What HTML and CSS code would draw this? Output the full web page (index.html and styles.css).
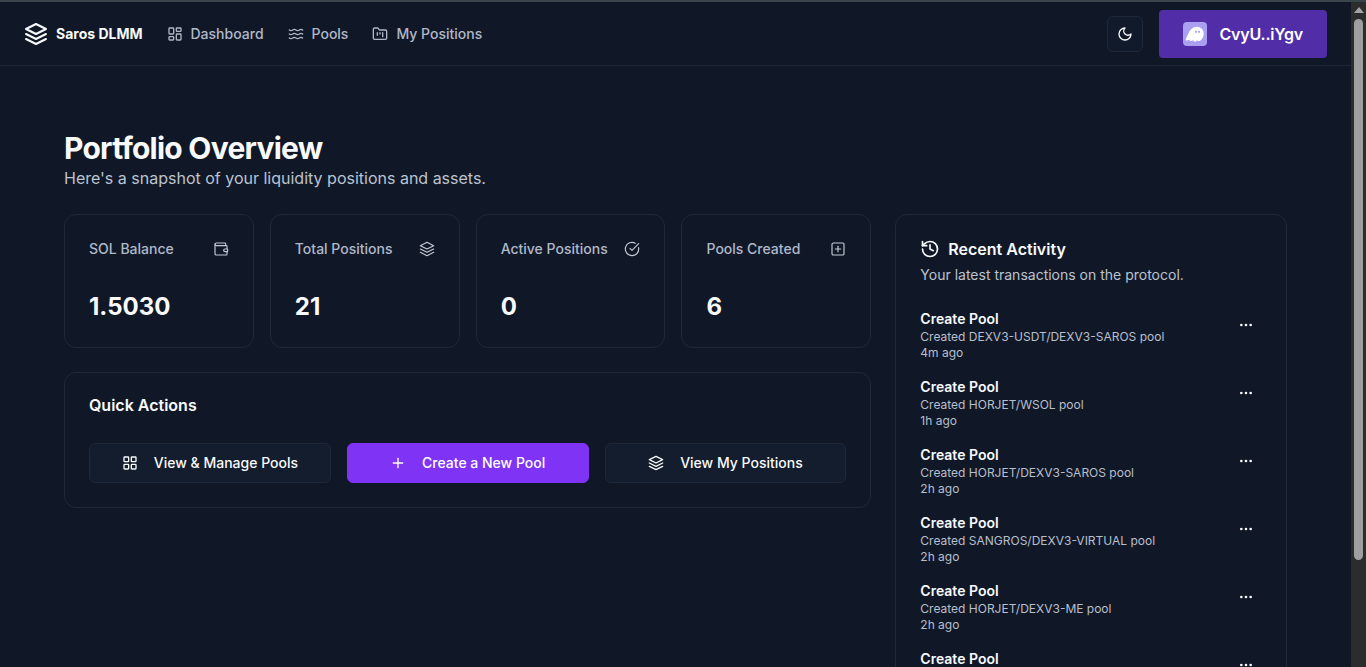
FILE: index.html
```html
<!DOCTYPE html>
<html lang="en">
<head>
<meta charset="utf-8">
<title>Saros DLMM</title>
<link rel="stylesheet" href="styles.css">
</head>
<body>
<svg class="sprite" aria-hidden="true">
  <symbol id="i-layers" viewBox="0 0 24 24"><path d="M12 2 2 7l10 5 10-5-10-5Z"/><path d="m2 12 10 5 10-5"/><path d="m2 17 10 5 10-5"/></symbol>
  <symbol id="i-dash" viewBox="0 0 24 24"><rect x="3" y="3" width="7" height="9" rx="1"/><rect x="14" y="3" width="7" height="5" rx="1"/><rect x="14" y="12" width="7" height="9" rx="1"/><rect x="3" y="16" width="7" height="5" rx="1"/></symbol>
  <symbol id="i-grid" viewBox="0 0 24 24"><rect x="3" y="3" width="7" height="7" rx="1"/><rect x="14" y="3" width="7" height="7" rx="1"/><rect x="14" y="14" width="7" height="7" rx="1"/><rect x="3" y="14" width="7" height="7" rx="1"/></symbol>
  <symbol id="i-waves" viewBox="0 0 24 24"><path d="M2 6c.6.5 1.2 1 2.500 1C7 7 7 5 9.500 5c2.600 0 2.400 2 5 2 2.500 0 2.500-2 5-2 1.300 0 1.900.5 2.500 1"/><path d="M2 12c.6.5 1.200 1 2.500 1 2.500 0 2.500-2 5-2 2.600 0 2.400 2 5 2 2.500 0 2.500-2 5-2 1.300 0 1.900.5 2.500 1"/><path d="M2 18c.6.5 1.200 1 2.500 1 2.500 0 2.500-2 5-2 2.600 0 2.400 2 5 2 2.500 0 2.500-2 5-2 1.300 0 1.900.5 2.500 1"/></symbol>
  <symbol id="i-folder" viewBox="0 0 24 24"><path d="M4 20h16a2 2 0 0 0 2-2V8a2 2 0 0 0-2-2h-7.930a2 2 0 0 1-1.660-.9l-.82-1.200A2 2 0 0 0 7.930 3H4a2 2 0 0 0-2 2v13c0 1.100.9 2 2 2Z"/><path d="M8 10v4"/><path d="M12 10v2"/><path d="M16 10v6"/></symbol>
  <symbol id="i-moon" viewBox="0 0 24 24"><path d="M12 3a6 6 0 0 0 9 9 9 9 0 1 1-9-9Z"/></symbol>
  <symbol id="i-wallet" viewBox="0 0 24 24"><path d="M19 7V4a1 1 0 0 0-1-1H5a2 2 0 0 0 0 4h15a1 1 0 0 1 1 1v4h-3a2 2 0 0 0 0 4h3a1 1 0 0 0 1-1v-2a1 1 0 0 0-1-1"/><path d="M3 5v14a2 2 0 0 0 2 2h15a1 1 0 0 0 1-1v-4"/></symbol>
  <symbol id="i-check" viewBox="0 0 24 24"><path d="M21.800 10A10 10 0 1 1 17 3.340"/><path d="m9 11 3 3L22 4"/></symbol>
  <symbol id="i-square-plus" viewBox="0 0 24 24"><rect x="3" y="3" width="18" height="18" rx="2"/><path d="M8 12h8"/><path d="M12 8v8"/></symbol>
  <symbol id="i-plus" viewBox="0 0 24 24"><path d="M5 12h14"/><path d="M12 5v14"/></symbol>
  <symbol id="i-history" viewBox="0 0 24 24"><path d="M3 12a9 9 0 1 0 9-9 9.750 9.750 0 0 0-6.740 2.740L3 8"/><path d="M3 3v5h5"/><path d="M12 7v5l4 2"/></symbol>
  <symbol id="i-dots" viewBox="0 0 24 24"><circle cx="12" cy="12" r="1"/><circle cx="19" cy="12" r="1"/><circle cx="5" cy="12" r="1"/></symbol>
</svg>

<div class="page">
  <header class="topbar">
    <div class="topbar-left">
      <a class="brand"><svg class="icon brand-icon"><use href="#i-layers"/></svg><span>Saros DLMM</span></a>
      <nav class="nav">
        <a class="nav-link"><svg class="icon"><use href="#i-dash"/></svg>Dashboard</a>
        <a class="nav-link"><svg class="icon"><use href="#i-waves"/></svg>Pools</a>
        <a class="nav-link"><svg class="icon"><use href="#i-folder"/></svg>My Positions</a>
      </nav>
    </div>
    <div class="topbar-right">
      <button class="theme-btn"><svg class="icon"><use href="#i-moon"/></svg></button>
      <button class="wallet-btn">
        <svg class="wallet-logo" viewBox="0 0 24 24"><rect width="24" height="24" rx="4" fill="#ab9ff2"/><path fill="#fff" d="M3.200 18.600c-.6 0-.8-.5-.5-1.100C4.600 13.500 7 4.800 13.500 4.800c4.500 0 7.200 3.200 7.200 6.600 0 4-2.600 7.700-5 7.700-1 0-1.500-.8-1.500-.8s-1 1.400-2.200 1.400c-1.200 0-1.800-1.400-1.800-1.400s-1.400.9-2.600.6c-1-.2-1.400-.9-1.400-.9s-2.500.6-3.400.6Z"/><circle cx="12.900" cy="9.800" r="1.100" fill="#ab9ff2"/><circle cx="16.100" cy="9.800" r="1.100" fill="#ab9ff2"/></svg>
        CvyU..iYgv
      </button>
    </div>
  </header>

  <main class="main">
    <h1 class="title">Portfolio Overview</h1>
    <p class="subtitle">Here's a snapshot of your liquidity positions and assets.</p>

    <div class="layout">
      <div class="left">
        <section class="stats">
          <div class="card stat"><div class="stat-head"><span>SOL Balance</span><svg class="icon"><use href="#i-wallet"/></svg></div><div class="stat-value">1.5030</div></div>
          <div class="card stat"><div class="stat-head"><span>Total Positions</span><svg class="icon"><use href="#i-layers"/></svg></div><div class="stat-value">21</div></div>
          <div class="card stat"><div class="stat-head"><span>Active Positions</span><svg class="icon"><use href="#i-check"/></svg></div><div class="stat-value">0</div></div>
          <div class="card stat"><div class="stat-head"><span>Pools Created</span><svg class="icon"><use href="#i-square-plus"/></svg></div><div class="stat-value">6</div></div>
        </section>

        <section class="card actions">
          <h2 class="actions-title">Quick Actions</h2>
          <div class="actions-row">
            <button class="action"><svg class="icon"><use href="#i-grid"/></svg>View &amp; Manage Pools</button>
            <button class="action action-primary"><svg class="icon"><use href="#i-plus"/></svg>Create a New Pool</button>
            <button class="action"><svg class="icon"><use href="#i-layers"/></svg>View My Positions</button>
          </div>
        </section>
      </div>

      <aside class="card activity">
        <h2 class="activity-title"><svg class="icon icon-20"><use href="#i-history"/></svg>Recent Activity</h2>
        <p class="activity-sub">Your latest transactions on the protocol.</p>
        <ul class="activity-list">
          <li class="row"><div><div class="row-title">Create Pool</div><div class="row-text">Created DEXV3-USDT/DEXV3-SAROS pool</div><div class="row-text">4m ago</div></div><button class="more"><svg class="icon"><use href="#i-dots"/></svg></button></li>
          <li class="row"><div><div class="row-title">Create Pool</div><div class="row-text">Created HORJET/WSOL pool</div><div class="row-text">1h ago</div></div><button class="more"><svg class="icon"><use href="#i-dots"/></svg></button></li>
          <li class="row"><div><div class="row-title">Create Pool</div><div class="row-text">Created HORJET/DEXV3-SAROS pool</div><div class="row-text">2h ago</div></div><button class="more"><svg class="icon"><use href="#i-dots"/></svg></button></li>
          <li class="row"><div><div class="row-title">Create Pool</div><div class="row-text">Created SANGROS/DEXV3-VIRTUAL pool</div><div class="row-text">2h ago</div></div><button class="more"><svg class="icon"><use href="#i-dots"/></svg></button></li>
          <li class="row"><div><div class="row-title">Create Pool</div><div class="row-text">Created HORJET/DEXV3-ME pool</div><div class="row-text">2h ago</div></div><button class="more"><svg class="icon"><use href="#i-dots"/></svg></button></li>
          <li class="row"><div><div class="row-title">Create Pool</div></div><button class="more"><svg class="icon"><use href="#i-dots"/></svg></button></li>
        </ul>
      </aside>
    </div>
  </main>
</div>

<div class="scrollbar" aria-hidden="true">
  <div class="scroll-arrow"></div>
  <div class="scroll-thumb"></div>
</div>
</body>
</html>
```

FILE: styles.css
```css
* { box-sizing: border-box; }

html, body { height: 100%; }

body {
  margin: 0;
  height: 100vh;
  overflow: hidden;
  display: flex;
  border-top: 2px solid #39434a;
  background: #101828;
  color: #f8fafc;
  font-family: Inter, "Noto Sans", sans-serif;
  font-size: 14px;
  line-height: 20px;
}

.sprite { display: none; }

.icon {
  width: 16px;
  height: 16px;
  flex: none;
  fill: none;
  stroke: currentColor;
  stroke-width: 2;
  stroke-linecap: round;
  stroke-linejoin: round;
}
.icon-20 { width: 20px; height: 20px; }

.page { flex: 1; min-width: 0; }

.topbar {
  height: 64px;
  padding: 0 24px;
  display: flex;
  align-items: center;
  justify-content: space-between;
  border-bottom: 1px solid #1e2838;
}
.topbar-left, .topbar-right { display: flex; align-items: center; }
.topbar-left { gap: 24px; }
.topbar-right { gap: 16px; }

.brand {
  display: flex;
  align-items: center;
  gap: 8px;
  font-weight: 700;
  color: #f8fafc;
}
.brand-icon { width: 24px; height: 24px; }

.nav { display: flex; gap: 24px; }
.nav-link {
  display: flex;
  align-items: center;
  gap: 8px;
  font-weight: 500;
  color: #b0b8c8;
}

.theme-btn {
  width: 36px;
  height: 36px;
  padding: 0;
  display: flex;
  align-items: center;
  justify-content: center;
  border: 1px solid #1e2838;
  border-radius: 6px;
  background: #111a2a;
  color: #f8fafc;
}

.wallet-btn {
  height: 48px;
  padding: 0 24px;
  display: flex;
  align-items: center;
  gap: 12px;
  border: 0;
  border-radius: 4px;
  background: #512da8;
  color: #fff;
  font: 600 16px/24px Inter, sans-serif;
  letter-spacing: -0.2px;
}
.wallet-logo { width: 24px; height: 24px; flex: none; }

.main { padding: 64px 64px 0; }

.title {
  margin: 0;
  font-size: 30px;
  line-height: 36px;
  font-weight: 700;
  letter-spacing: -0.75px;
  color: #f8fafc;
}
.subtitle {
  margin: 0 0 24px;
  font-size: 16px;
  line-height: 24px;
  color: #bcc3cf;
}

.layout {
  display: grid;
  grid-template-columns: repeat(3, minmax(0, 1fr));
  gap: 24px;
  align-items: start;
}
.left {
  grid-column: span 2;
  display: flex;
  flex-direction: column;
  gap: 24px;
}

.card {
  border: 1px solid #1e2838;
  border-radius: 12px;
  background: #101828;
}

.stats {
  display: grid;
  grid-template-columns: repeat(4, minmax(0, 1fr));
  gap: 16px;
}
.stat { padding: 24px; }
.stat-head {
  display: flex;
  align-items: center;
  justify-content: space-between;
  font-weight: 500;
  color: #b0b8c8;
}
.stat-head .icon { color: #c3c9d5; stroke-width: 1.75; }
.stat-value {
  margin-top: 32px;
  font-size: 24px;
  line-height: 32px;
  font-weight: 700;
  color: #f8fafc;
}

.actions { padding: 24px; }
.actions-title {
  margin: 0 0 30px;
  font-size: 16px;
  line-height: 16px;
  font-weight: 600;
}
.actions-row {
  display: grid;
  grid-template-columns: repeat(3, minmax(0, 1fr));
  gap: 16px;
}
.action {
  height: 40px;
  display: flex;
  align-items: center;
  justify-content: center;
  gap: 16px;
  border: 1px solid #1e2838;
  border-radius: 6px;
  background: #131d2e;
  color: #f8fafc;
  font: 500 14px/20px Inter, sans-serif;
}
.action-primary {
  border-color: #7e33f5;
  background: #7e33f5;
  color: #fff;
}

.activity { padding: 24px; }
.activity-title {
  margin: 0;
  display: flex;
  align-items: center;
  gap: 8px;
  font-size: 16px;
  line-height: 20px;
  font-weight: 600;
}
.activity-sub {
  margin: 6px 0 24px;
  color: #bcc3cf;
}
.activity-list {
  margin: 0;
  padding: 0;
  list-style: none;
  display: flex;
  flex-direction: column;
  gap: 16px;
}
.row {
  display: flex;
  align-items: flex-start;
  justify-content: space-between;
}
.row-title { font-weight: 600; color: #f8fafc; }
.row-text { font-size: 12px; line-height: 16px; color: #b8bfcc; }
.more {
  width: 32px;
  height: 32px;
  padding: 0;
  display: flex;
  align-items: center;
  justify-content: center;
  border: 0;
  background: none;
  color: #f8fafc;
}

.scrollbar {
  flex: none;
  width: 15px;
  display: flex;
  flex-direction: column;
  align-items: center;
  background: #2c2c2c;
}
.scroll-arrow {
  margin-top: 5px;
  width: 0;
  height: 0;
  border-left: 5px solid transparent;
  border-right: 5px solid transparent;
  border-bottom: 6px solid #a3a3a3;
}
.scroll-thumb {
  margin-top: 6px;
  width: 9px;
  height: 541px;
  border-radius: 5px;
  background: #9f9f9f;
}
```
